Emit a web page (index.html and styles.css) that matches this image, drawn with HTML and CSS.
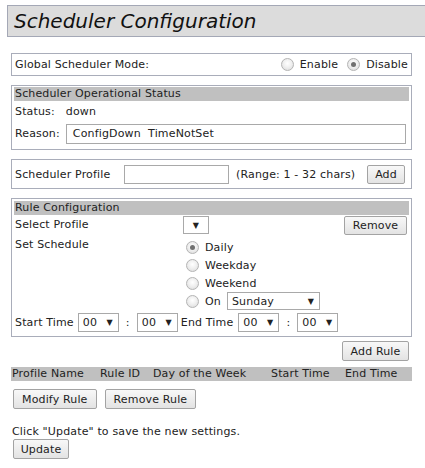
FILE: index.html
```html
<!DOCTYPE html>
<html>
<head>
<meta charset="utf-8">
<link rel="stylesheet" href="styles.css">
</head>
<body>
<div class="title">Scheduler Configuration</div>
<div class="content">
  <div class="box mode">
    <span>Global Scheduler Mode:</span>
    <span class="radios">
      <span class="opt"><i class="radio"></i>Enable</span>
      <span class="opt"><i class="radio on"></i>Disable</span>
    </span>
  </div>

  <div class="box status">
    <div class="hdr">Scheduler Operational Status</div>
    <div class="srow">Status:<span class="val">down</span></div>
    <div class="rrow">Reason:<span class="input reason">ConfigDown&nbsp;&nbsp;TimeNotSet</span></div>
  </div>

  <div class="box profile">
    <span class="plabel">Scheduler Profile</span>
    <span class="input pname"></span>
    <span class="range">(Range: 1 - 32 chars)</span>
    <span class="btn add">Add</span>
  </div>

  <div class="box rule">
    <div class="hdr">Rule Configuration</div>
    <div class="grid">
      <div class="lbl lsel">Select Profile</div>
      <div class="selrow">
        <span class="sel psel"><span class="arr">▼</span></span>
        <span class="btn remove">Remove</span>
      </div>
      <div class="lbl lsched">Set Schedule</div>
      <div class="sched">
        <div class="ropt"><i class="radio on"></i>Daily</div>
        <div class="ropt"><i class="radio"></i>Weekday</div>
        <div class="ropt"><i class="radio"></i>Weekend</div>
        <div class="ropt"><i class="radio"></i>On<span class="sel day"><span>Sunday</span><span class="arr">▼</span></span></div>
      </div>
    </div>
    <div class="time">
      <span>Start Time</span>
      <span class="sel tsel"><span>00</span><span class="arr">▼</span></span>
      <span class="colon">:</span>
      <span class="sel tsel"><span>00</span><span class="arr">▼</span></span>
      <span class="etl">End Time</span>
      <span class="sel tsel"><span>00</span><span class="arr">▼</span></span>
      <span class="colon">:</span>
      <span class="sel tsel"><span>00</span><span class="arr">▼</span></span>
    </div>
  </div>

  <div class="addrow"><span class="btn">Add Rule</span></div>

  <div class="thead">
    <span>Profile Name</span>
    <span>Rule ID</span>
    <span>Day of the Week</span>
    <span>Start Time</span>
    <span>End Time</span>
  </div>

  <div class="actions">
    <span class="btn">Modify Rule</span>
    <span class="btn">Remove Rule</span>
  </div>

  <div class="note">Click "Update" to save the new settings.</div>
  <div class="upd"><span class="btn">Update</span></div>
</div>
</body>
</html>
```

FILE: styles.css
```css
html, body {
  margin: 0;
  padding: 0;
  background: #fff;
}
body {
  font-family: "DejaVu Sans", Verdana, sans-serif;
  font-size: 11px;
  letter-spacing: 0.15px;
  color: #222;
  overflow: hidden;
}
.title {
  margin: 5px 0 0 7px;
  height: 30px;
  line-height: 31px;
  border: 1px solid #a4a8b6;
  border-right: none;
  background: #dcdcdc;
  font-style: italic;
  font-size: 20px;
  letter-spacing: 0;
  color: #111;
  padding-left: 6px;
  white-space: nowrap;
}
.content {
  margin-left: 11px;
  width: 401px;
}
.box {
  border: 1px solid #a9adba;
  box-sizing: border-box;
}
.mode {
  margin-top: 16px;
  height: 23px;
  display: flex;
  align-items: center;
  justify-content: space-between;
  padding: 0 3px 0 3px;
}
.radios {
  display: flex;
  gap: 9px;
}
.opt, .ropt {
  display: flex;
  align-items: center;
}
.radio {
  display: inline-block;
  box-sizing: border-box;
  width: 13px;
  height: 13px;
  border-radius: 50%;
  border: 1px solid #b4b4b4;
  background: radial-gradient(circle at 50% 40%, #ffffff 0%, #f0f0f0 45%, #d8d8d8 100%);
  margin-right: 6px;
  position: relative;
}
.radio.on::after {
  content: "";
  position: absolute;
  left: 3px;
  top: 3px;
  width: 5px;
  height: 5px;
  border-radius: 50%;
  background: #707070;
}
.status {
  margin-top: 9px;
  padding: 1px 2px 4px 2px;
}
.hdr {
  background: #c0c0c0;
  height: 14px;
  line-height: 14px;
  padding-left: 1px;
}
.srow {
  height: 21px;
  line-height: 21px;
  padding-left: 1px;
}
.val {
  margin-left: 11px;
}
.rrow {
  display: flex;
  align-items: center;
  padding: 0 3px 0 1px;
  height: 23px;
}
.input {
  display: inline-block;
  box-sizing: border-box;
  border: 1px solid #a9a9a9;
  background: #fff;
  height: 20px;
  line-height: 18px;
}
.reason {
  margin-left: 6px;
  flex: 1;
  padding-left: 6px;
}
.profile {
  margin-top: 9px;
  height: 30px;
  display: flex;
  align-items: center;
  padding: 0 6px 0 3px;
}
.plabel {
  width: 109px;
}
.pname {
  width: 105px;
  height: 19px;
}
.range {
  margin-left: 7px;
}
.btn {
  display: inline-flex;
  align-items: center;
  justify-content: center;
  box-sizing: border-box;
  height: 19px;
  padding: 0 8px;
  border: 1px solid #a3a3a3;
  border-radius: 2px;
  background: linear-gradient(#f8f8f8, #e3e3e3);
  color: #222;
  white-space: nowrap;
}
.add {
  margin-left: auto;
  width: 38px;
  padding: 0;
}
.rule {
  margin-top: 9px;
  padding: 2px 2px 3px 2px;
}
.grid {
  display: grid;
  grid-template-columns: 169px 1fr;
}
.lbl {
  padding-left: 1px;
}
.lsel {
  height: 20px;
  line-height: 20px;
}
.selrow {
  display: flex;
  align-items: center;
  justify-content: space-between;
  height: 20px;
  padding-right: 2px;
}
.lsched {
  margin-top: 3px;
  line-height: 14px;
}
.sched {
  display: flex;
  flex-direction: column;
  padding-left: 3px;
  margin-top: 3px;
}
.ropt {
  height: 18px;
}
.sel {
  display: inline-flex;
  align-items: center;
  justify-content: space-between;
  box-sizing: border-box;
  height: 18px;
  border: 1px solid #a9a9a9;
  background: #fff;
  padding: 0 5px 0 4px;
  white-space: nowrap;
}
.arr {
  font-size: 8px;
}
.psel {
  width: 26px;
  justify-content: center;
  padding: 0;
}
.remove {
  width: 63px;
  padding: 0;
}
.day {
  width: 93px;
  margin-left: 6px;
}
.time {
  display: flex;
  align-items: center;
  height: 21px;
  margin-top: 2px;
  padding-left: 1px;
}
.tsel {
  width: 41px;
  height: 19px;
}
.time > span:first-child {
  margin-right: 4px;
}
.colon {
  width: 18px;
  text-align: center;
}
.etl {
  margin: 0 5px 0 3px;
}
.addrow {
  display: flex;
  justify-content: flex-end;
  margin-top: 4px;
  padding-right: 3px;
}
.addrow .btn {
  height: 20px;
  width: 67px;
  padding: 0;
}
.thead {
  margin-top: 6px;
  display: grid;
  grid-template-columns: 88px 53px 118px 74px 1fr;
  background: #c0c0c0;
  height: 14px;
  line-height: 14px;
  padding-left: 1px;
}
.actions {
  margin-top: 8px;
  display: flex;
  gap: 8px;
  padding-left: 2px;
}
.actions .btn {
  height: 20px;
}
.note {
  margin-top: 16px;
  line-height: 14px;
  padding-left: 1px;
}
.upd {
  margin-top: 0;
  padding-left: 2px;
}
.upd .btn {
  height: 20px;
  width: 56px;
  padding: 0;
}
```
